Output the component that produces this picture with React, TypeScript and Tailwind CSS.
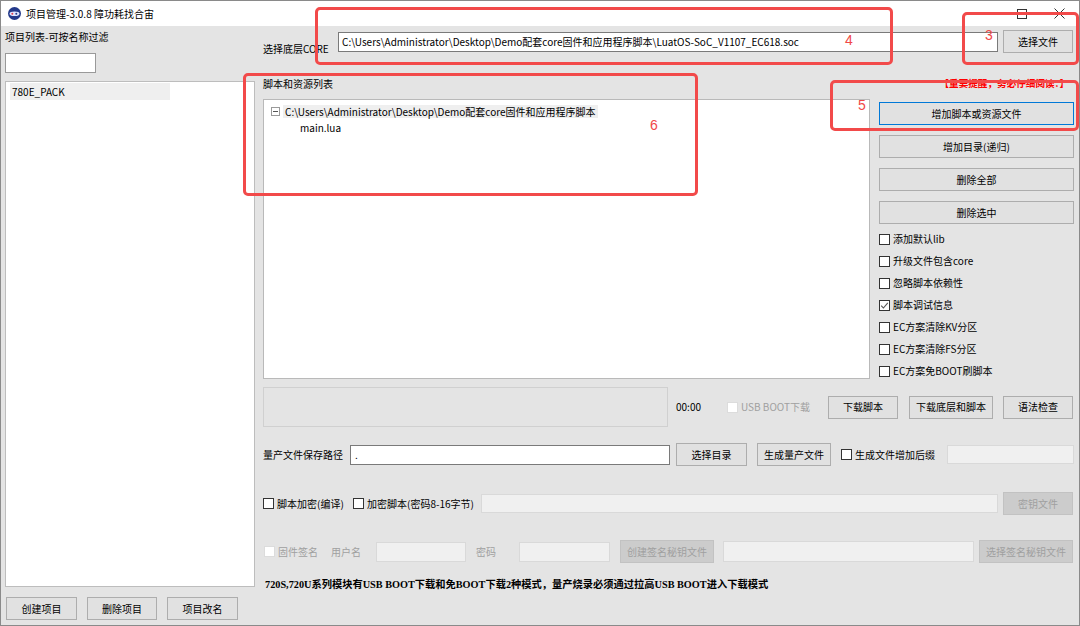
import React from "react";

const F = "font-['Noto_Sans_CJK_SC','Noto_Sans',sans-serif]";

type BtnProps = {
  className?: string;
  children?: React.ReactNode;
  primary?: boolean;
  disabled?: boolean;
};

function Btn({ className = "", children, primary = false, disabled = false }: BtnProps) {
  const look = disabled
    ? "bg-[#cccccc] border-[#c2c2c2] text-[#a0a0a0]"
    : primary
    ? "bg-[#e1e1e1] border-[#0078d7] text-black"
    : "bg-[#e1e1e1] border-[#adadad] text-black";
  return (
    <div
      className={`flex shrink-0 items-center justify-center border text-[10px] leading-[12px] whitespace-nowrap ${look} ${className}`}
    >
      {children}
    </div>
  );
}

type CheckProps = {
  label: string;
  checked?: boolean;
  disabled?: boolean;
  className?: string;
};

function Check({ label, checked = false, disabled = false, className = "" }: CheckProps) {
  return (
    <div className={`flex shrink-0 items-center ${className}`}>
      <span
        className={`flex h-[11px] w-[11px] shrink-0 items-center justify-center border bg-white ${
          disabled ? "border-[#dcdcdc]" : "border-[#333333]"
        }`}
      >
        {checked && (
          <svg width="9" height="9" viewBox="0 0 9 9">
            <polyline points="1.2,4.6 3.4,7 7.8,1.8" fill="none" stroke="#555555" strokeWidth="1.1" />
          </svg>
        )}
      </span>
      <span
        className={`ml-[3px] whitespace-nowrap text-[10px] leading-[12px] ${
          disabled ? "text-[#a0a0a0]" : "text-black"
        }`}
      >
        {label}
      </span>
    </div>
  );
}

const inputEnabled = "shrink-0 border border-[#7a7a7a] bg-white";
const inputDisabled = "shrink-0 border border-[#d9d9d9] bg-[#f0f0f0]";

export default function App() {
  return (
    <div
      className={`relative flex h-[626px] w-[1080px] flex-col overflow-hidden border border-[#8a8a8a] bg-[#e4e4e4] text-black ${F}`}
    >
      {/* Title bar */}
      <div className="flex h-[25px] shrink-0 items-center bg-white">
        <svg className="ml-[7px]" width="13" height="13" viewBox="0 0 13 13">
          <circle cx="6.5" cy="6.5" r="6.5" fill="#23398a" />
          <ellipse cx="6.5" cy="6.8" rx="5" ry="2.3" fill="#dfe6ff" />
          <circle cx="4.3" cy="6.8" r="1" fill="#e23b4b" />
          <circle cx="8.3" cy="6.8" r="1" fill="#23398a" />
        </svg>
        <span className="ml-[5px] text-[10px] leading-[12px]">项目管理-3.0.8 障功耗找合宙</span>
        <div className="ml-auto flex items-center">
          <svg width="10" height="10" viewBox="0 0 10 10">
            <rect x="0.5" y="0.5" width="9" height="9" fill="none" stroke="#333" strokeWidth="1" />
          </svg>
          <svg className="ml-[27px] mr-[14px]" width="11" height="11" viewBox="0 0 11 11">
            <path d="M0.5 0.5 L10.5 10.5 M10.5 0.5 L0.5 10.5" stroke="#333" strokeWidth="1" />
          </svg>
        </div>
      </div>

      {/* Body */}
      <div className="flex flex-1">
        {/* Left column */}
        <div className="flex w-[262px] shrink-0 flex-col pl-[4px] pt-[5px]">
          <div className="text-[10px] leading-[12px]">项目列表-可按名称过滤</div>
          <div className={`mt-[10px] h-[20px] w-[91px] ${inputEnabled} border-[#999999]`} />
          <div className="mt-[8px] h-[506px] w-[250px] border border-[#bdbdbd] bg-white pt-[1px]">
            <div className="ml-[4px] h-[17px] w-[160px] bg-[#efefef] pl-[2px] text-[10px] leading-[17px]">
              780E_PACK
            </div>
          </div>
          <div className="mt-[10px] flex">
            <Btn className="ml-[1px] h-[23px] w-[71px]">创建项目</Btn>
            <Btn className="ml-[10px] h-[23px] w-[70px]">删除项目</Btn>
            <Btn className="ml-[10px] h-[23px] w-[71px]">项目改名</Btn>
          </div>
        </div>

        {/* Right column */}
        <div className="flex w-[811px] shrink-0 flex-col pt-[4px]">
          {/* CORE row */}
          <div className="flex h-[25px] items-start">
            <div className="mt-[13px] w-[75px] shrink-0 text-[10px] leading-[12px]">选择底层CORE</div>
            <div className={`mt-[2px] h-[20px] w-[660px] px-[3px] text-[10px] leading-[18px] whitespace-nowrap ${inputEnabled}`}>
              C:\Users\Administrator\Desktop\Demo配套core固件和应用程序脚本\LuatOS-SoC_V1107_EC618.soc
            </div>
            <Btn className="ml-[5px] h-[23px] w-[70px]">选择文件</Btn>
          </div>

          {/* list label row */}
          <div className="mt-[23px] flex h-[12px] items-center">
            <div className="text-[10px] leading-[12px]">脚本和资源列表</div>
            <div className="ml-auto mr-[5px] mt-[-2px] text-[9.6px] font-bold leading-[12px] text-[#ff0000]">
              【重要提醒，务必仔细阅读：】
            </div>
          </div>

          {/* tree + side buttons */}
          <div className="mt-[9px] flex items-start">
            <div className="h-[280px] w-[607px] shrink-0 border border-[#b9b9b9] bg-white">
              <div className="mt-[5px] flex h-[13px] items-center">
                <span className="ml-[7px] flex h-[9px] w-[9px] items-center justify-center border border-[#9a9a9a]">
                  <span className="h-[1px] w-[5px] bg-[#555555]" />
                </span>
                <span className="ml-[3px] bg-[#efefef] px-[2px] text-[10px] leading-[13px] whitespace-nowrap">
                  C:\Users\Administrator\Desktop\Demo配套core固件和应用程序脚本
                </span>
              </div>
              <div className="mt-[3px] pl-[36px] text-[10px] leading-[13px]">main.lua</div>
            </div>
            <div className="ml-[9px] flex w-[195px] shrink-0 flex-col pt-[3px]">
              <Btn primary className="h-[23px] w-full">增加脚本或资源文件</Btn>
              <Btn className="mt-[10px] h-[23px] w-full">增加目录(递归)</Btn>
              <Btn className="mt-[10px] h-[23px] w-full">删除全部</Btn>
              <Btn className="mt-[10px] h-[23px] w-full">删除选中</Btn>
              <div className="mt-[4px] flex flex-col">
                <Check className="h-[22px]" label="添加默认lib" />
                <Check className="h-[22px]" label="升级文件包含core" />
                <Check className="h-[22px]" label="忽略脚本依赖性" />
                <Check className="h-[22px]" label="脚本调试信息" checked />
                <Check className="h-[22px]" label="EC方案清除KV分区" />
                <Check className="h-[22px]" label="EC方案清除FS分区" />
                <Check className="h-[22px]" label="EC方案免BOOT刷脚本" />
              </div>
            </div>
          </div>

          {/* progress row */}
          <div className="mt-[5px] flex h-[40px] items-center">
            <div className="h-[40px] w-[405px] shrink-0 border border-[#d0d0d0]" />
            <div className="ml-[8px] text-[10px] leading-[12px]">00:00</div>
            <Check className="ml-[26px]" label="USB BOOT下载" disabled />
            <div className="ml-auto mr-[1px] flex items-center">
              <Btn className="h-[23px] w-[70px]">下载脚本</Btn>
              <Btn className="ml-[11px] h-[23px] w-[84px]">下载底层和脚本</Btn>
              <Btn className="ml-[10px] h-[23px] w-[70px]">语法检查</Btn>
            </div>
          </div>

          {/* output path row */}
          <div className="mt-[16px] flex h-[23px] items-center">
            <div className="w-[87px] shrink-0 text-[10px] leading-[12px]">量产文件保存路径</div>
            <div className={`h-[20px] w-[320px] pl-[4px] text-[10px] leading-[17px] ${inputEnabled}`}>.</div>
            <Btn className="ml-[6px] h-[23px] w-[71px]">选择目录</Btn>
            <Btn className="ml-[10px] h-[23px] w-[74px]">生成量产文件</Btn>
            <Check className="ml-[10px]" label="生成文件增加后缀" />
            <div className={`ml-auto h-[19px] w-[127px] ${inputDisabled}`} />
          </div>

          {/* encryption row */}
          <div className="mt-[26px] flex h-[23px] items-center">
            <Check className="w-[90px]" label="脚本加密(编译)" />
            <Check className="w-[128px]" label="加密脚本(密码8-16字节)" />
            <div className={`h-[19px] w-[517px] ${inputDisabled}`} />
            <Btn disabled className="ml-[5px] h-[23px] w-[70px]">密钥文件</Btn>
          </div>

          {/* signature row */}
          <div className="mt-[25px] flex h-[23px] items-center">
            <Check className="w-[68px] pl-[1px]" label="固件签名" disabled />
            <div className="w-[45px] shrink-0 text-[10px] leading-[12px] text-[#a0a0a0]">用户名</div>
            <div className={`h-[20px] w-[90px] ${inputDisabled}`} />
            <div className="ml-[10px] w-[43px] shrink-0 text-[10px] leading-[12px] text-[#a0a0a0]">密码</div>
            <div className={`h-[20px] w-[91px] ${inputDisabled}`} />
            <Btn disabled className="ml-[10px] h-[23px] w-[94px]">创建签名秘钥文件</Btn>
            <div className={`ml-[9px] h-[21px] w-[251px] ${inputDisabled}`} />
            <Btn disabled className="ml-[5px] h-[23px] w-[94px]">选择签名秘钥文件</Btn>
          </div>

          {/* note */}
          <div className="mt-[16px] pl-[2px] font-['Liberation_Serif','Noto_Sans_CJK_SC',serif] text-[10.25px] font-bold leading-[12px] whitespace-nowrap">
            720S,720U系列模块有USB BOOT下载和免BOOT下载2种模式，量产烧录必须通过拉高USB BOOT进入下载模式
          </div>
        </div>
      </div>

      {/* Red annotation overlays */}
      <div className="pointer-events-none absolute left-[314px] top-[6px] h-[58px] w-[578px] rounded-[5px] border-[3px] border-[#f24a4a]" />
      <div className="pointer-events-none absolute left-[961px] top-[11px] h-[53px] w-[117px] rounded-[5px] border-[3px] border-[#f24a4a]" />
      <div className="pointer-events-none absolute left-[829px] top-[79px] h-[51px] w-[249px] rounded-[5px] border-[3px] border-[#f24a4a]" />
      <div className="pointer-events-none absolute left-[242px] top-[72px] h-[123px] w-[455px] rounded-[5px] border-[3px] border-[#f24a4a]" />
      <span className="absolute left-[844px] top-[32px] font-['Liberation_Sans',sans-serif] text-[14px] leading-[14px] text-[#f04848]">4</span>
      <span className="absolute left-[984px] top-[27px] font-['Liberation_Sans',sans-serif] text-[14px] leading-[14px] text-[#f04848]">3</span>
      <span className="absolute left-[857px] top-[97px] font-['Liberation_Sans',sans-serif] text-[14px] leading-[14px] text-[#f04848]">5</span>
      <span className="absolute left-[649px] top-[117px] font-['Liberation_Sans',sans-serif] text-[14px] leading-[14px] text-[#f04848]">6</span>
    </div>
  );
}
